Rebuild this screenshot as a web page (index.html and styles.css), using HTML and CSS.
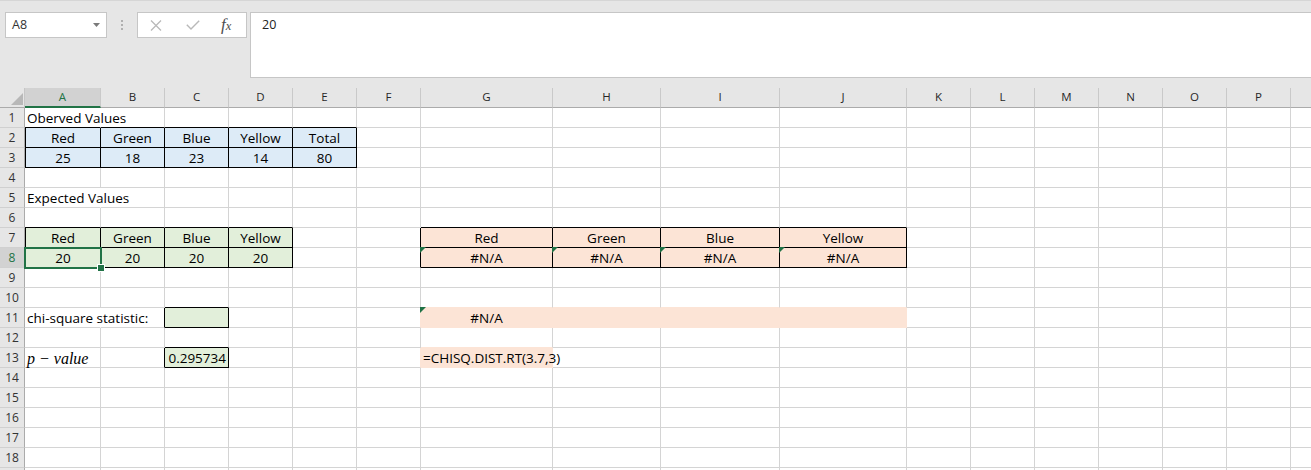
FILE: index.html
```html
<!DOCTYPE html>
<html>
<head>
<meta charset="utf-8">
<link rel="stylesheet" href="styles.css">
</head>
<body>
<div class="toolbar">
  <div class="namebox"><span>A8</span><svg class="dd" width="7" height="4" viewBox="0 0 7 4"><polygon points="0,0 7,0 3.5,4" fill="#7a7a7a"/></svg></div>
  <div class="grip"><i></i><i></i><i></i></div>
  <div class="fbtns">
    <svg class="ic-x" width="12" height="11" viewBox="0 0 12 11"><path d="M1 0.5 L11 10.5 M11 0.5 L1 10.5" stroke="#b9b9b9" stroke-width="1.3" fill="none"/></svg>
    <svg class="ic-ok" width="14" height="10" viewBox="0 0 14 10"><path d="M0.8 4.8 L5 9 L13.2 0.8" stroke="#b9b9b9" stroke-width="1.4" fill="none"/></svg>
    <span class="fx"><span class="fx-f">f</span><span class="fx-x">x</span></span>
  </div>
  <div class="finput">20</div>
</div>
<div class="sheet">
  <div class="corner"><svg width="12" height="12" viewBox="0 0 12 12"><polygon points="12,0 12,12 0,12" fill="#b8b8b8"/></svg></div>
  <div class="h sel-h">A</div><div class="h">B</div><div class="h">C</div><div class="h">D</div><div class="h">E</div><div class="h">F</div><div class="h">G</div><div class="h">H</div><div class="h">I</div><div class="h">J</div><div class="h">K</div><div class="h">L</div><div class="h">M</div><div class="h">N</div><div class="h">O</div><div class="h">P</div><div class="h"></div>

  <div class="rh">1</div><div class="c ov kb">Oberved Values</div><div class="c kb"></div><div class="c kb"></div><div class="c kb"></div><div class="c kb"></div><div class="c"></div><div class="c"></div><div class="c"></div><div class="c"></div><div class="c"></div><div class="c"></div><div class="c"></div><div class="c"></div><div class="c"></div><div class="c"></div><div class="c"></div><div class="c"></div>

  <div class="rh">2</div><div class="c bx bl blu ctr">Red</div><div class="c bx blu ctr">Green</div><div class="c bx blu ctr">Blue</div><div class="c bx blu ctr">Yellow</div><div class="c bx blu ctr">Total</div><div class="c"></div><div class="c"></div><div class="c"></div><div class="c"></div><div class="c"></div><div class="c"></div><div class="c"></div><div class="c"></div><div class="c"></div><div class="c"></div><div class="c"></div><div class="c"></div>

  <div class="rh">3</div><div class="c bx bl blu ctr">25</div><div class="c bx blu ctr">18</div><div class="c bx blu ctr">23</div><div class="c bx blu ctr">14</div><div class="c bx blu ctr">80</div><div class="c"></div><div class="c"></div><div class="c"></div><div class="c"></div><div class="c"></div><div class="c"></div><div class="c"></div><div class="c"></div><div class="c"></div><div class="c"></div><div class="c"></div><div class="c"></div>

  <div class="rh">4</div><div class="c"></div><div class="c"></div><div class="c"></div><div class="c"></div><div class="c"></div><div class="c"></div><div class="c"></div><div class="c"></div><div class="c"></div><div class="c"></div><div class="c"></div><div class="c"></div><div class="c"></div><div class="c"></div><div class="c"></div><div class="c"></div><div class="c"></div>

  <div class="rh">5</div><div class="c ov">Expected Values</div><div class="c"></div><div class="c"></div><div class="c"></div><div class="c"></div><div class="c"></div><div class="c"></div><div class="c"></div><div class="c"></div><div class="c"></div><div class="c"></div><div class="c"></div><div class="c"></div><div class="c"></div><div class="c"></div><div class="c"></div><div class="c"></div>

  <div class="rh">6</div><div class="c kb"></div><div class="c kb"></div><div class="c kb"></div><div class="c kb"></div><div class="c"></div><div class="c"></div><div class="c kb"></div><div class="c kb"></div><div class="c kb"></div><div class="c kb"></div><div class="c"></div><div class="c"></div><div class="c"></div><div class="c"></div><div class="c"></div><div class="c"></div><div class="c"></div>

  <div class="rh">7</div><div class="c bx bl grn ctr">Red</div><div class="c bx grn ctr">Green</div><div class="c bx grn ctr">Blue</div><div class="c bx grn ctr">Yellow</div><div class="c"></div><div class="c kr"></div><div class="c bx pch ctr">Red</div><div class="c bx pch ctr">Green</div><div class="c bx pch ctr">Blue</div><div class="c bx pch ctr">Yellow</div><div class="c"></div><div class="c"></div><div class="c"></div><div class="c"></div><div class="c"></div><div class="c"></div><div class="c"></div>

  <div class="rh rsel">8</div><div class="c bx bl grn ctr sel">20</div><div class="c bx grn ctr">20</div><div class="c bx grn ctr">20</div><div class="c bx grn ctr">20</div><div class="c"></div><div class="c kr"></div><div class="c bx pch ctr err">#N/A</div><div class="c bx pch ctr err">#N/A</div><div class="c bx pch ctr err">#N/A</div><div class="c bx pch ctr err">#N/A</div><div class="c"></div><div class="c"></div><div class="c"></div><div class="c"></div><div class="c"></div><div class="c"></div><div class="c"></div>

  <div class="rh">9</div><div class="c"></div><div class="c"></div><div class="c"></div><div class="c"></div><div class="c"></div><div class="c"></div><div class="c"></div><div class="c"></div><div class="c"></div><div class="c"></div><div class="c"></div><div class="c"></div><div class="c"></div><div class="c"></div><div class="c"></div><div class="c"></div><div class="c"></div>

  <div class="rh">10</div><div class="c"></div><div class="c"></div><div class="c kb"></div><div class="c"></div><div class="c"></div><div class="c"></div><div class="c pb"></div><div class="c pb"></div><div class="c pb"></div><div class="c pb"></div><div class="c"></div><div class="c"></div><div class="c"></div><div class="c"></div><div class="c"></div><div class="c"></div><div class="c"></div>

  <div class="rh">11</div><div class="c ov">chi-square statistic:</div><div class="c kr"></div><div class="c bx grn"></div><div class="c"></div><div class="c"></div><div class="c pr"></div><div class="c pf pch ctr err">#N/A</div><div class="c pf pch"></div><div class="c pf pch"></div><div class="c pf pch"></div><div class="c"></div><div class="c"></div><div class="c"></div><div class="c"></div><div class="c"></div><div class="c"></div><div class="c"></div>

  <div class="rh">12</div><div class="c"></div><div class="c"></div><div class="c kb"></div><div class="c"></div><div class="c"></div><div class="c"></div><div class="c pb"></div><div class="c"></div><div class="c"></div><div class="c"></div><div class="c"></div><div class="c"></div><div class="c"></div><div class="c"></div><div class="c"></div><div class="c"></div><div class="c"></div>

  <div class="rh">13</div><div class="c it">p − value</div><div class="c kr"></div><div class="c bx grn rt">0.295734</div><div class="c"></div><div class="c"></div><div class="c pr"></div><div class="c pf pch">=CHISQ.DIST.RT(3.7,3)</div><div class="c"></div><div class="c"></div><div class="c"></div><div class="c"></div><div class="c"></div><div class="c"></div><div class="c"></div><div class="c"></div><div class="c"></div><div class="c"></div>

  <div class="rh">14</div><div class="c"></div><div class="c"></div><div class="c"></div><div class="c"></div><div class="c"></div><div class="c"></div><div class="c"></div><div class="c"></div><div class="c"></div><div class="c"></div><div class="c"></div><div class="c"></div><div class="c"></div><div class="c"></div><div class="c"></div><div class="c"></div><div class="c"></div>

  <div class="rh">15</div><div class="c"></div><div class="c"></div><div class="c"></div><div class="c"></div><div class="c"></div><div class="c"></div><div class="c"></div><div class="c"></div><div class="c"></div><div class="c"></div><div class="c"></div><div class="c"></div><div class="c"></div><div class="c"></div><div class="c"></div><div class="c"></div><div class="c"></div>

  <div class="rh">16</div><div class="c"></div><div class="c"></div><div class="c"></div><div class="c"></div><div class="c"></div><div class="c"></div><div class="c"></div><div class="c"></div><div class="c"></div><div class="c"></div><div class="c"></div><div class="c"></div><div class="c"></div><div class="c"></div><div class="c"></div><div class="c"></div><div class="c"></div>

  <div class="rh">17</div><div class="c"></div><div class="c"></div><div class="c"></div><div class="c"></div><div class="c"></div><div class="c"></div><div class="c"></div><div class="c"></div><div class="c"></div><div class="c"></div><div class="c"></div><div class="c"></div><div class="c"></div><div class="c"></div><div class="c"></div><div class="c"></div><div class="c"></div>

  <div class="rh">18</div><div class="c"></div><div class="c"></div><div class="c"></div><div class="c"></div><div class="c"></div><div class="c"></div><div class="c"></div><div class="c"></div><div class="c"></div><div class="c"></div><div class="c"></div><div class="c"></div><div class="c"></div><div class="c"></div><div class="c"></div><div class="c"></div><div class="c"></div>

  <div class="rh"></div><div class="c"></div><div class="c"></div><div class="c"></div><div class="c"></div><div class="c"></div><div class="c"></div><div class="c"></div><div class="c"></div><div class="c"></div><div class="c"></div><div class="c"></div><div class="c"></div><div class="c"></div><div class="c"></div><div class="c"></div><div class="c"></div><div class="c"></div>
</div>
</body>
</html>
```
FILE: styles.css
```css
* { box-sizing: border-box; }
html, body { margin: 0; padding: 0; }
body {
  width: 1311px;
  height: 470px;
  overflow: hidden;
  background: #ffffff;
  font-family: "Open Sans", "Noto Sans", sans-serif;
}

/* ---------- formula bar ---------- */
.toolbar {
  height: 88px;
  background: #e6e6e6;
  border-top: 1px solid #d6d6d6;
  padding-top: 11px;
  display: flex;
  align-items: flex-start;
}
.namebox {
  margin-left: 5px;
  width: 102px;
  height: 26px;
  background: #fff;
  border: 1px solid #c6c6c6;
  display: flex;
  align-items: center;
  padding-left: 6px;
  font-size: 12.5px;
  line-height: 16px;
  color: #333;
}
.namebox .dd { margin-left: auto; margin-right: 6px; }
.grip {
  width: 30px;
  height: 26px;
  display: flex;
  flex-direction: column;
  align-items: center;
  justify-content: center;
  gap: 2px;
}
.grip i {
  display: block;
  width: 2px;
  height: 2px;
  background: #b0b0b0;
}
.fbtns {
  width: 110px;
  height: 26px;
  background: #fff;
  border: 1px solid #c6c6c6;
  display: flex;
  align-items: center;
  padding-left: 12px;
}
.ic-x { margin-right: 24px; }
.ic-ok { margin-right: 21px; }
.fx {
  font-family: "Liberation Serif", "DejaVu Serif", serif;
  font-style: italic;
  color: #4d4d4d;
  line-height: 16px;
  white-space: nowrap;
}
.fx-f { font-size: 17px; }
.fx-x { font-size: 12.5px; }
.finput {
  flex: 1;
  margin-left: 3px;
  height: 66px;
  background: #fff;
  border: 1px solid #c6c6c6;
  border-right: none;
  padding: 4px 0 0 11px;
  font-size: 12.5px;
  line-height: 16px;
  color: #222;
}

/* ---------- sheet grid ---------- */
.sheet {
  display: grid;
  width: max-content;
  grid-template-columns: 25px 76px repeat(5, 64px) 132px 108px 119px 127px repeat(6, 64px) 64px;
  grid-auto-rows: 20px;
  background: #fff;
}
.corner {
  background: #e6e6e6;
  border-right: 1px solid #c6c6c6;
  border-bottom: 1px solid #ababab;
  display: flex;
  justify-content: flex-end;
  align-items: flex-end;
  padding: 0 1px 2px 0;
}
.h {
  background: #e6e6e6;
  border-right: 1px solid #c9c9c9;
  border-bottom: 1px solid #ababab;
  text-align: center;
  font-size: 11.5px;
  line-height: 16px;
  padding-top: 1px;
  color: #262626;
}
.h.sel-h {
  background: #d2d2d2;
  color: #217346;
  border-bottom: 2px solid #217346;
}
.rh {
  background: #e6e6e6;
  border-right: 1px solid #ababab;
  border-bottom: 1px solid #d0d0d0;
  text-align: center;
  font-size: 12px;
  line-height: 19px;
  color: #333;
}
.rh.rsel {
  background: #d2d2d2;
  color: #217346;
}

.c {
  min-width: 0;
  border-right: 1px solid #d4d4d4;
  border-bottom: 1px solid #d4d4d4;
  padding: 1px 2px 0;
  font-size: 13.5px;
  line-height: 19px;
  color: #000;
  white-space: nowrap;
}
.ctr { text-align: center; }
.rt { text-align: right; }
.it {
  font-family: "Liberation Serif", "DejaVu Serif", serif;
  font-style: italic;
  font-size: 16px;
  line-height: 20px;
}

.ov { border-right-color: transparent; }
.kr { border-right-color: #000; }
.kb { border-bottom-color: #000; }
.pr { border-right-color: #fce4d6; }
.pb { border-bottom-color: #fce4d6; }

.blu { background: #ddebf7; }
.grn { background: #e2efda; }
.pch { background: #fce4d6; }
.pf { border-right-color: #fce4d6; border-bottom-color: #fce4d6; }

.bx { border-right-color: #000; border-bottom-color: #000; }
.bl { border-left: 1px solid #000; }

/* error indicator triangle */
.err { position: relative; }
.err::before {
  content: "";
  position: absolute;
  left: -1px;
  top: -1px;
  border-top: 6px solid #1e7145;
  border-right: 6px solid transparent;
}

/* active cell selection */
.sel { position: relative; z-index: 2; }
.sel::before {
  content: "";
  position: absolute;
  left: -2px;
  right: -2px;
  top: -1px;
  bottom: -2px;
  border: 2px solid #217346;
}
.sel::after {
  content: "";
  position: absolute;
  left: 71px;
  top: 16px;
  width: 6px;
  height: 6px;
  box-sizing: content-box;
  background: #217346;
  border: 1px solid #fff;
}
```
